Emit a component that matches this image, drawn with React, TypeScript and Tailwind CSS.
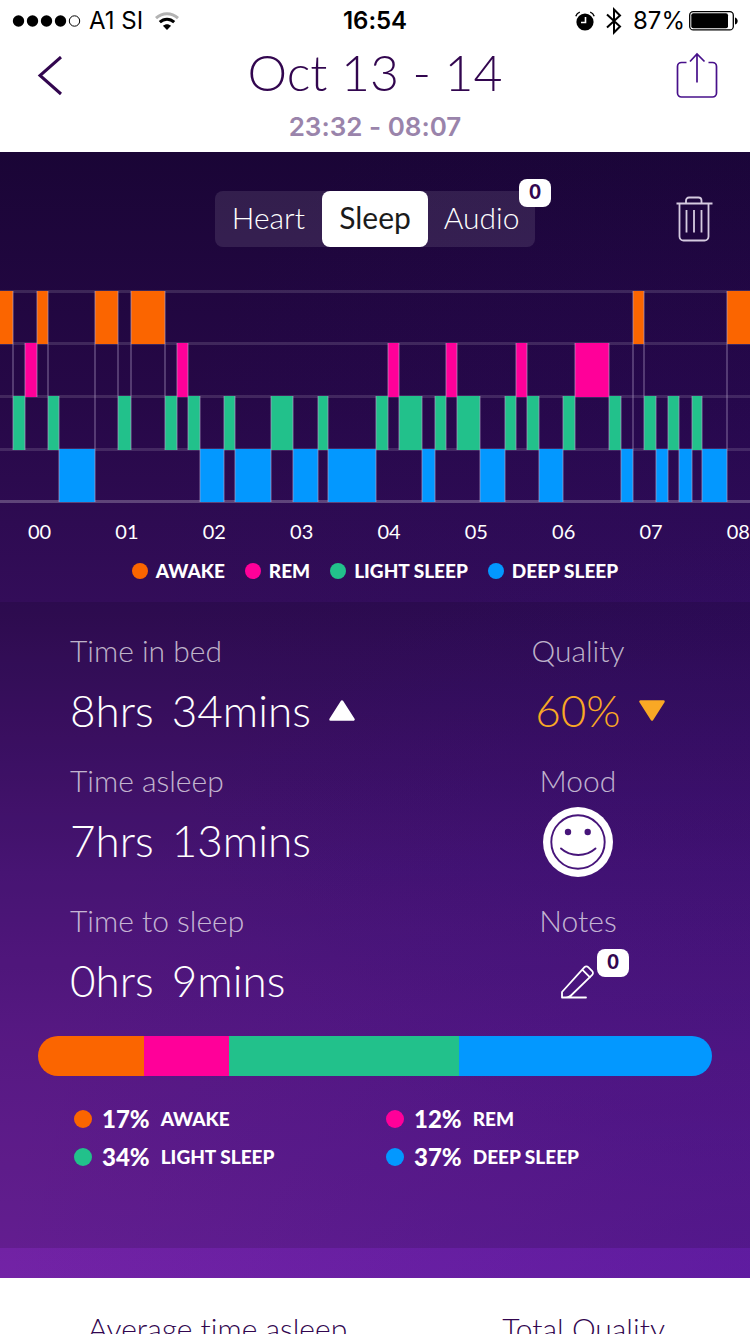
import { ReactNode, useState } from "react";

type Stage = "awake" | "rem" | "light" | "deep";

const stages: Record<Stage, { label: string; bg: string; fill: string; top: number; height: number }> = {
	awake: { label: "AWAKE", bg: "bg-[#fb6500]", fill: "fill-[#fb6500]", top: 1, height: 53 },
	rem: { label: "REM", bg: "bg-[#ff0099]", fill: "fill-[#ff0099]", top: 53, height: 54 },
	light: { label: "LIGHT SLEEP", bg: "bg-[#22c18b]", fill: "fill-[#22c18b]", top: 106, height: 54 },
	deep: { label: "DEEP SLEEP", bg: "bg-[#0398ff]", fill: "fill-[#0398ff]", top: 159, height: 53 },
};

const stageOrder: Stage[] = ["awake", "rem", "light", "deep"];

// [stage, where it ends on the 750 wide time line]
const night: [Stage, number][] = [
	["awake", 13], ["light", 25], ["rem", 37], ["awake", 48], ["light", 59], ["deep", 95],
	["awake", 118], ["light", 131], ["awake", 165], ["light", 177], ["rem", 188], ["light", 200],
	["deep", 224], ["light", 235], ["deep", 271], ["light", 293], ["deep", 318], ["light", 328],
	["deep", 376], ["light", 388], ["rem", 399], ["light", 422], ["deep", 435], ["light", 446],
	["rem", 457], ["light", 480], ["deep", 505], ["light", 516], ["rem", 527], ["light", 539],
	["deep", 563], ["light", 575], ["rem", 609], ["light", 621], ["deep", 633], ["awake", 644],
	["light", 656], ["deep", 668], ["light", 679], ["deep", 692], ["light", 702], ["deep", 727],
	["awake", 750],
];

const hours = ["00", "01", "02", "03", "04", "05", "06", "07", "08"];

const totals: { stage: Stage; percent: string; share: number }[] = [
	{ stage: "awake", percent: "17%", share: 106 },
	{ stage: "rem", percent: "12%", share: 85 },
	{ stage: "light", percent: "34%", share: 230 },
	{ stage: "deep", percent: "37%", share: 253 },
];

function StatusBar() {
	return (
		<div className="grid h-[42px] grid-cols-[1fr_auto_1fr] items-center px-3 font-[Inter,sans-serif] text-2xl text-black">
			<div className="flex items-center gap-2">
				<svg viewBox="0 0 69 14" className="h-[14px] w-[69px]">
					<circle cx="6.5" cy="7" r="5.7" />
					<circle cx="20.5" cy="7" r="5.7" />
					<circle cx="34.5" cy="7" r="5.7" />
					<circle cx="48.5" cy="7" r="5.7" />
					<circle cx="62.5" cy="7" r="5.2" fill="none" stroke="black" />
				</svg>
				<span>A1 SI</span>
				<svg viewBox="0 0 24 18" className="ml-1 h-[18px] w-6" fill="none" strokeWidth="3">
					<path d="M1 6.2C7.5 0.2 16.5 0.2 23 6.2" stroke="#b3b3b3" />
					<path d="M4.8 10.2c4.3-4 10.1-4 14.4 0" stroke="black" />
					<path d="M12 18l-4.1-4.2c2.5-2.1 5.7-2.1 8.2 0z" fill="black" />
				</svg>
			</div>
			<span className="font-semibold">16:54</span>
			<div className="flex items-center justify-end gap-[10px]">
				<svg viewBox="0 0 20 20" className="h-5 w-5">
					<circle cx="10" cy="11" r="8.6" />
					<path d="M0.8 5.2C1.5 3.2 2.8 1.9 4.8 1.2M19.2 5.2C18.5 3.2 17.2 1.9 15.2 1.2" stroke="black" strokeWidth="1.4" fill="none" />
					<path d="M10.5 6v5.5H6" stroke="white" strokeWidth="1.6" fill="none" />
				</svg>
				<svg viewBox="0 0 18 28" className="h-7 w-[18px]" fill="none" stroke="black" strokeWidth="2">
					<path d="M2 7.5l13 12-6 6v-23l6 6-13 12" />
				</svg>
				<div className="flex items-center gap-1">
					<span>87%</span>
					<svg viewBox="0 0 49 20" className="h-5 w-[49px]">
						<rect x="0.7" y="0.7" width="43.6" height="18.2" rx="3.5" fill="none" stroke="black" strokeWidth="1.3" />
						<rect x="2.3" y="2.3" width="36.7" height="15" rx="2" />
						<path d="M46 6.5c3.6 1 3.6 6 0 7z" />
					</svg>
				</div>
			</div>
		</div>
	);
}

function Header() {
	return (
		<header className="bg-white">
			<StatusBar />
			<div className="grid grid-cols-[1fr_auto_1fr] items-start px-8 text-[#32064f]">
				<button aria-label="Back" className="mt-[14px] justify-self-start pl-1">
					<svg viewBox="0 0 28 40" className="h-10 w-7" fill="none" stroke="currentColor" strokeWidth="3">
						<path d="M25 1L4 19.5 25 38" />
					</svg>
				</button>
				<div className="text-center">
					<h1 className="text-[50px] font-light leading-[60px]">Oct 13 - 14</h1>
					<p className="font-[Inter,sans-serif] text-[26px] font-semibold leading-[50px] text-[#9a84ab]">23:32 - 08:07</p>
				</div>
				<button aria-label="Share" className="mt-[10px] justify-self-end">
					<svg viewBox="0 0 42 46" className="h-[46px] w-[42px]" fill="none" stroke="#47108a" strokeWidth="1.7">
						<path d="M10.5 10.5H5.5a4 4 0 0 0-4 4v26.5a4 4 0 0 0 4 4h31a4 4 0 0 0 4-4V14.5a4 4 0 0 0-4-4h-4" />
						<path d="M21 30.5V2M14 9.5L21 2l7.5 7.5" />
					</svg>
				</button>
			</div>
		</header>
	);
}

function Badge({ children }: { children: ReactNode }) {
	return (
		<span className="absolute flex h-7 w-8 items-center justify-center rounded-lg bg-white pb-1 text-xl font-black text-[#32064f]">
			{children}
		</span>
	);
}

function Toolbar() {
	const [tab, setTab] = useState("Sleep");

	return (
		<div className="grid grid-cols-[1fr_320px_1fr] items-center px-9">
			<div className="relative col-start-2 grid h-14 grid-cols-3 rounded-lg bg-white/10">
				{["Heart", "Sleep", "Audio"].map((name) => (
					<button
						key={name}
						onClick={() => setTab(name)}
						className={name === tab ? "rounded-lg bg-white pb-1 text-[30px] text-[#1b1b1b]" : "pb-1 text-[30px] font-light text-white"}
					>
						{name}
					</button>
				))}
				<div className="absolute -top-3 right-4">
					<Badge>0</Badge>
				</div>
			</div>
			<button aria-label="Delete" className="justify-self-end">
				<svg viewBox="0 0 38 46" className="h-[46px] w-[38px]" fill="none" stroke="#d5cbe0" strokeWidth="1.8">
					<path d="M0.5 7.5h36M3.5 8v32.5a4 4 0 0 0 4 4h21a4 4 0 0 0 4-4V8M10 7.5V4.5a3 3 0 0 1 3-3h9.5a3 3 0 0 1 3 3v3" />
					<path d="M10.5 14v22.5M18 14v22.5M25.5 14v22.5" />
				</svg>
			</button>
		</div>
	);
}

function SleepChart() {
	return (
		<svg viewBox="0 0 750 213" preserveAspectRatio="none" className="block h-[213px] w-full">
			{[0, 52, 105, 158].map((y) => (
				<rect key={y} y={y} width="750" height="3" fill="white" fillOpacity="0.13" />
			))}
			<rect y="210" width="750" height="3" fill="white" fillOpacity="0.24" />
			{night.map(([stage, end], i) => {
				const start = i ? night[i - 1][1] : 0;
				const { top, height, fill } = stages[stage];
				return <rect key={end} x={start} y={top} width={end - start} height={height} className={fill} />;
			})}
			{night.slice(0, -1).map(([stage, end], i) => {
				const a = stages[stage];
				const b = stages[night[i + 1][0]];
				return (
					<line
						key={end}
						x1={end}
						x2={end}
						y1={Math.min(a.top, b.top)}
						y2={Math.max(a.top + a.height, b.top + b.height)}
						stroke="#b4a0c8"
						strokeOpacity="0.45"
						strokeWidth="1.5"
					/>
				);
			})}
		</svg>
	);
}

function Stat({ label, children }: { label: string; children: ReactNode }) {
	return (
		<div>
			<dt className="text-[30px] font-light leading-9 text-white/70">{label}</dt>
			<dd className="flex h-[84px] items-center text-[44px] font-light text-white">{children}</dd>
		</div>
	);
}

function CenterStat({ label, children }: { label: string; children: ReactNode }) {
	return (
		<div className="w-50 text-center">
			<dt className="text-[30px] font-light leading-9 text-white/70">{label}</dt>
			<dd className="flex h-[84px] items-center justify-center text-[44px] font-light text-white">{children}</dd>
		</div>
	);
}

function Triangle({ className }: { className: string }) {
	return (
		<svg viewBox="0 0 26 21" className={className}>
			<path d="M13 1.5L24.5 19.5h-23z" fill="currentColor" stroke="currentColor" strokeWidth="2.5" strokeLinejoin="round" />
		</svg>
	);
}

function Smiley() {
	return (
		<svg viewBox="0 0 70 70" className="mt-1 h-[70px] w-[70px]" fill="none" stroke="#47157a" strokeWidth="1.9">
			<circle cx="35" cy="35" r="35" fill="white" stroke="none" />
			<circle cx="35" cy="35" r="26.7" />
			<circle cx="25" cy="25" r="3.2" fill="#47157a" stroke="none" />
			<circle cx="44.7" cy="25" r="3.2" fill="#47157a" stroke="none" />
			<path d="M18 41.5c9.5 8.6 25 8.6 34.5 0" strokeLinecap="round" />
		</svg>
	);
}

function Stats() {
	return (
		<dl className="pl-[70px] pr-[72px] pt-[30px]">
			<div className="flex justify-between pb-[10px]">
				<Stat label="Time in bed">
					<span className="mr-[18px]">8hrs</span>
					<span>34mins</span>
					<Triangle className="ml-[18px] h-[21px] w-[26px]" />
				</Stat>
				<CenterStat label="Quality">
					<div className="grid grid-cols-[1fr_auto_1fr] items-center gap-[18px] text-[#f9a825]">
						<span className="col-start-2">60%</span>
						<Triangle className="h-[21px] w-[26px] rotate-180" />
					</div>
				</CenterStat>
			</div>
			<div className="flex justify-between pb-5">
				<Stat label="Time asleep">
					<span className="mr-[18px]">7hrs</span>
					<span>13mins</span>
				</Stat>
				<CenterStat label="Mood">
					<Smiley />
				</CenterStat>
			</div>
			<div className="flex justify-between pb-[14px]">
				<Stat label="Time to sleep">
					<span className="mr-[18px]">0hrs</span>
					<span>9mins</span>
				</Stat>
				<CenterStat label="Notes">
					<button aria-label="Edit notes" className="relative">
						<svg viewBox="0 0 34 34" className="mt-1 h-[34px] w-[34px]" fill="none" stroke="white" strokeWidth="1.8" strokeLinejoin="round" strokeLinecap="round">
							<path d="M1 27L23.5 2.2a2.6 2.6 0 0 1 3.7 0l4 4a2.6 2.6 0 0 1 0 3.7L10 30.5c-1.5 1.500-3 2-5 2H1zM21.5 4.8l7.5 7.5M1 32.5H25" />
						</svg>
						<div className="absolute -top-3 left-9">
							<Badge>0</Badge>
						</div>
					</button>
				</CenterStat>
			</div>
		</dl>
	);
}

function App() {
	return (
		<div className="min-h-screen overflow-hidden bg-white font-[Lato,sans-serif] [font-variant-ligatures:none]">
			<Header />
			<main className="bg-[radial-gradient(circle_at_100%_100%,rgba(60,15,150,0.35),transparent_55%),radial-gradient(circle_at_100%_40%,rgba(40,10,110,0.2),transparent_60%),linear-gradient(to_bottom,#1a0536,#260847_22%,#330d59_40%,#511783_64%,#641d96_80%,#7323a6)] pb-[30px]">
				<section className="pb-[15px] pt-[39px]">
					<Toolbar />
					<div className="pt-[43px]">
						<SleepChart />
					</div>
					<div className="flex justify-between pl-7 pt-3 text-xl leading-8 text-white">
						{hours.map((hour) => (
							<span key={hour}>{hour}</span>
						))}
					</div>
					<ul className="flex justify-center gap-5 pt-2 text-[19px] font-black leading-8 text-white">
						{stageOrder.map((stage) => (
							<li key={stage} className="flex items-center gap-2">
								<span className={`h-4 w-4 rounded-full ${stages[stage].bg}`} />
								{stages[stage].label}
							</li>
						))}
					</ul>
				</section>
				<section className="bg-black/12 pb-[72px]">
					<Stats />
					<div className="mx-[38px] flex h-10 overflow-hidden rounded-full">
						{totals.map(({ stage, share }) => (
							<div key={stage} className={stages[stage].bg} style={{ flexGrow: share }} />
						))}
					</div>
					<ul className="grid grid-cols-2 pl-[74px] pr-[52px] pt-6 text-white">
						{totals.map(({ stage, percent }) => (
							<li key={stage} className="flex h-[38px] items-center">
								<span className={`mr-[10px] h-[18px] w-[18px] rounded-full ${stages[stage].bg}`} />
								<span className="mr-[11px] text-2xl font-black">{percent}</span>
								<span className="text-[19px] font-black">{stages[stage].label}</span>
							</li>
						))}
					</ul>
				</section>
			</main>
			<footer className="flex h-14 justify-between overflow-hidden pl-[88px] pr-[85px] pt-[30px] text-[30px] font-light leading-10 text-[#32064f]">
				<span>Average time asleep</span>
				<span>Total Quality</span>
			</footer>
		</div>
	);
}

export default App;
